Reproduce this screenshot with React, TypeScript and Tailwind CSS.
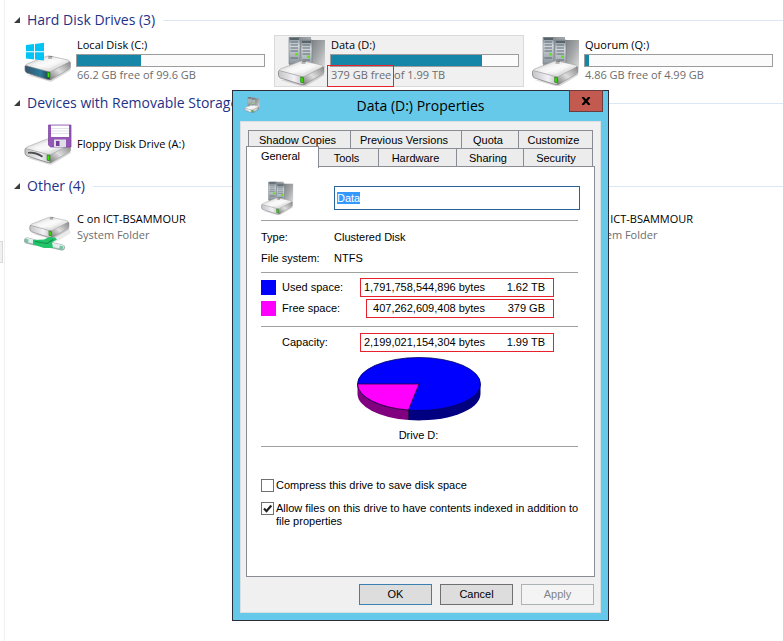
import { useEffect, useRef, useState } from "react";
import type { ReactNode } from "react";

type DriveKind = "system" | "cluster" | "floppy" | "network";

interface Drive {
  name: string;
  kind: DriveKind;
  detail?: string;
  used?: number;
  selected?: boolean;
  className?: string;
}

const hardDrives: Drive[] = [
  { name: "Local Disk (C:)", kind: "system", detail: "66.2 GB free of 99.6 GB", used: 34 },
  { name: "Data (D:)", kind: "cluster", detail: "379 GB free of 1.99 TB", used: 81, selected: true },
  { name: "Quorum (Q:)", kind: "cluster", detail: "4.86 GB free of 4.99 GB", used: 2 },
];

const removable: Drive[] = [{ name: "Floppy Disk Drive (A:)", kind: "floppy" }];

const others: Drive[] = [
  { name: "C on ICT-BSAMMOUR", kind: "network", detail: "System Folder" },
  { name: "E on ICT-BSAMMOUR", kind: "network", detail: "System Folder", className: "col-start-3" },
];

const topTabs = [
  { label: "Shadow Copies", width: "w-[103px]" },
  { label: "Previous Versions", width: "w-[112px]" },
  { label: "Quota", width: "w-[58px]" },
  { label: "Customize", width: "flex-1" },
];

const bottomTabs = [
  { label: "Tools", width: "w-[61px]" },
  { label: "Hardware", width: "w-[79px]" },
  { label: "Sharing", width: "w-[68px]" },
  { label: "Security", width: "flex-1" },
];

function IconDefs() {
  return (
    <svg className="absolute h-0 w-0" aria-hidden="true">
      <defs>
        <linearGradient id="lid" x1="0" y1="0" x2="1" y2="1">
          <stop offset="0" stopColor="#cfcfcf" />
          <stop offset="0.5" stopColor="#f8f8f8" />
          <stop offset="1" stopColor="#c2c2c2" />
        </linearGradient>
        <linearGradient id="side" x1="0" y1="1" x2="1" y2="0">
          <stop offset="0" stopColor="#7a7a7a" />
          <stop offset="0.45" stopColor="#dedede" />
          <stop offset="1" stopColor="#858585" />
        </linearGradient>
        <linearGradient id="steel" x1="0" y1="0" x2="1" y2="0">
          <stop offset="0" stopColor="#c4c4c8" />
          <stop offset="0.6" stopColor="#f2f2f6" />
          <stop offset="1" stopColor="#b9b9bd" />
        </linearGradient>
        <linearGradient id="ocean" x1="0" y1="0" x2="1" y2="0">
          <stop offset="0" stopColor="#37536b" />
          <stop offset="0.6" stopColor="#2c7d9c" />
          <stop offset="1" stopColor="#1f3442" />
        </linearGradient>
        <linearGradient id="tower" x1="0" y1="0" x2="1" y2="1">
          <stop offset="0" stopColor="#7b7f82" />
          <stop offset="0.5" stopColor="#a4a7a9" />
          <stop offset="1" stopColor="#dcdddd" />
        </linearGradient>
        <linearGradient id="rack" x1="0" y1="0" x2="0" y2="1">
          <stop offset="0" stopColor="#7d8a93" />
          <stop offset="0.3" stopColor="#d4dbe0" />
          <stop offset="1" stopColor="#8b959c" />
        </linearGradient>
      </defs>
    </svg>
  );
}

function DriveBody({ front }: { front: string }) {
  return (
    <g>
      <path d="M3 39 L27 46 L47 34 L46 31 L27 40Z" fill="#000" opacity="0.15" />
      <path d="M1 30.5 Q1 29 3 29.5 L26 35.5 L27 43.5 Q25 44 23 43.3 L3 37 Q1 36 1 34Z" fill={`url(#${front})`} stroke="#777" strokeWidth="0.7" />
      <path d="M26 35.5 L45 25.5 Q46.5 25.5 46.5 27 V31 Q46.5 32 45 33 L28 43 Q27 43.7 26 43.3Z" fill="url(#side)" stroke="#888" strokeWidth="0.5" />
      <path d="M2 29.5 Q1.5 28.8 3 28 L22 20.5 Q24 19.7 26 20 L44 24 Q46.5 25 44.5 26.2 L28 35 Q26 36 24 35.5Z" fill="url(#lid)" stroke="#a0a0a0" strokeWidth="0.6" />
      <path d="M8 28.5 L24 22.3 L38 25.5 L25 32.5Z" fill="#fff" opacity="0.4" />
      <path d="M24.5 20.6 h4 M24 22 h4" stroke="#6a6a6a" strokeWidth="0.8" />
      <path d="M23.2 36 L25.8 36.5 V41.8 L23.2 41.2Z" fill="#38e500" stroke="#126400" strokeWidth="0.6" />
    </g>
  );
}

function DriveIcon({ kind, className }: { kind: DriveKind; className: string }) {
  return (
    <svg viewBox="0 0 48 50" className={className} aria-hidden="true">
      {kind === "system" && (
        <>
          <DriveBody front="ocean" />
          <path d="M2 9 L10 8 V15.2 H2Z M11 7.9 L20 6.8 V15.2 H11Z M2 16.2 H10 V23.4 L2 22.4Z M11 16.2 H20 V24.6 L11 23.5Z" fill="#00c4f5" />
        </>
      )}
      {kind === "floppy" && (
        <>
          <DriveBody front="steel" />
          <path d="M4 33 Q12 32 19 37 L18 38.5 Q11 34 4 34.5Z" fill="#4d4d4d" />
          <path d="M24.5 6 H47 V28 H26.5 L24.5 26Z" fill="#9457b5" stroke="#7a3d9c" strokeWidth="0.7" />
          <path d="M27 6.5 H45 V18 H27Z" fill="#fff" />
          <path d="M27 9.5 H45 M27 12 H45 M27 14.5 H45" stroke="#d4d4df" strokeWidth="0.7" />
          <path d="M30 20.5 H42 V28 H30Z" fill="#dedee6" />
          <path d="M32 22 H35.5 V27 H32Z" fill="#783c9a" />
        </>
      )}
      {kind === "network" && (
        <>
          <path d="M22 38 L44 24 L47 31 L32 40Z" fill="#000" opacity="0.08" />
          <g transform="translate(5 -2) scale(0.86)">
            <DriveBody front="steel" />
          </g>
          <path d="M3 38.5 L11 40.5 M27 43 L38 45.5" stroke="#9fb0b2" strokeWidth="6" strokeLinecap="round" />
          <path d="M3 38 L11 40 M27 42.5 L38 45" stroke="#e4eeee" strokeWidth="4" strokeLinecap="round" />
          <path d="M1 36.5 L4.5 37.5 L4 41 L1 40Z M36 43.5 L39.5 44.5 L38 48 L35 47Z" fill="#73c5a0" />
          <path d="M9 38 L20 37.5 L25 35 L31 35.5 L33 37.5 L28 40.5 L29 46 L20 46 L9 42.5Z" fill="#22c46a" />
          <path d="M11 39.5 L23 41.5 L29 37.5" fill="none" stroke="#10904a" strokeWidth="1.1" />
        </>
      )}
      {kind === "cluster" && (
        <>
          <path d="M11 1.5 L14 1 H33 V30 H11Z" fill="url(#tower)" />
          <path d="M11 1.5 H22 V28 H11Z" fill="url(#rack)" stroke="#737d83" strokeWidth="0.6" />
          <path d="M12.5 6 H20 M12.5 9 H20 M12.5 12 H20 M12.5 15 H20 M12.5 22 H20" stroke="#5c6870" strokeWidth="1" />
          <path d="M12 3 H21" stroke="#4b555b" strokeWidth="1.6" />
          <path d="M33 4 H47 V32 H33Z" fill="url(#tower)" />
          <path d="M23 4 H34 V32 H23Z" fill="url(#rack)" stroke="#737d83" strokeWidth="0.6" />
          <path d="M24.5 9 H32 M24.5 12 H32 M24.5 15 H32 M24.5 18 H32 M24.5 24 H32" stroke="#5c6870" strokeWidth="1" />
          <path d="M24 6 H33" stroke="#4b555b" strokeWidth="1.6" />
          <path d="M17 17 h3 v2.5 h-3Z M29 19.5 h3 v2.5 h-3Z" fill="#5fe619" />
          <g transform="translate(-0.5 5)">
            <DriveBody front="steel" />
          </g>
        </>
      )}
    </svg>
  );
}

function DriveTile({ drive }: { drive: Drive }) {
  const frame = drive.selected ? "border-[#d9d9d9] bg-[#f0f0f0]" : "border-transparent";
  const hasMeter = drive.used !== undefined;
  return (
    <div className={`relative flex h-[52px] border pl-[3px] text-[11px] leading-4 ${frame} ${drive.className ?? ""}`}>
      <DriveIcon kind={drive.kind} className="h-[50px] w-12 shrink-0" />
      <div className={`flex min-w-0 flex-1 flex-col justify-center pr-1 pl-1 ${hasMeter ? "pb-[3px]" : ""}`}>
        <p className="pl-px whitespace-nowrap text-black">{drive.name}</p>
        {hasMeter && (
          <div
            role="meter"
            aria-label={drive.name}
            aria-valuenow={drive.used}
            className="mt-px h-[13px] border border-[#9c9c9c] bg-[#fbfbfb]"
          >
            <div className="h-full bg-[#1586a7]" style={{ width: `${drive.used}%` }} />
          </div>
        )}
        {drive.detail && <p className="pl-px whitespace-nowrap text-[#6d6d6d]">{drive.detail}</p>}
      </div>
      {drive.selected && <div className="absolute top-[29px] left-[52px] h-[22px] w-[67px] border border-[#e8222d]" />}
    </div>
  );
}

function DriveGroup({ title, drives }: { title: string; drives: Drive[] }) {
  return (
    <section className="pb-px">
      <button type="button" className="flex h-[30px] w-full items-center text-left">
        <svg viewBox="0 0 6 6" className="mr-[7px] ml-2 h-1.5 w-1.5 shrink-0" aria-hidden="true">
          <path d="M6 0 V6 H0Z" fill="#3c3c3c" />
        </svg>
        <span className="pb-0.5 text-[14px] whitespace-nowrap text-[#1e3287]">{title}</span>
        <span className="ml-2 h-px flex-1 bg-[#dce7f5]" />
      </button>
      <div className="grid grid-cols-[repeat(3,250px)] gap-1 pl-[14px]">
        {drives.map((drive) => (
          <DriveTile key={drive.name} drive={drive} />
        ))}
      </div>
    </section>
  );
}

function Tab({ label, width }: { label: string; width: string }) {
  return (
    <button
      type="button"
      role="tab"
      aria-selected={false}
      className={`-ml-px h-[19px] border border-[#898c95] bg-[#ececec] pr-1 leading-4 first:ml-0 ${width}`}
    >
      {label}
    </button>
  );
}

function SpaceRow({ swatch, label, bytes, size, box }: { swatch?: string; label: string; bytes: string; size: string; box: string }) {
  return (
    <div className="flex h-[21px] items-center">
      <span className={`mr-1.5 h-[15px] w-[15px] ${swatch ?? ""}`} />
      <span>{label}</span>
      <span className={`mr-6 ml-auto flex h-[19px] items-center justify-end border border-[#e8222d] pr-2 whitespace-nowrap ${box}`}>
        <span>{bytes}</span>
        <span className="w-[60px] text-right">{size}</span>
      </span>
    </div>
  );
}

function UsagePie() {
  return (
    <svg viewBox="0 0 124 64" className="h-16 w-[124px]" role="img" aria-label="Drive D:">
      <path d="M0.5 27 V37 A61.5 26.5 0 0 0 51.5 63 V53Z" fill="#800080" />
      <path d="M51.5 53 V63 A61.5 26.5 0 0 0 123.5 37 V27Z" fill="#000080" />
      <ellipse cx="62" cy="27" rx="61.5" ry="26.5" fill="#0000ff" stroke="#000060" strokeWidth="0.8" />
      <path d="M62 27 H0.5 A61.5 26.5 0 0 0 51.5 53Z" fill="#ff00ff" stroke="#300030" strokeWidth="0.8" />
      <path d="M51.5 53 V63" stroke="#200040" strokeWidth="0.8" />
    </svg>
  );
}

function CheckRow({ initial, children }: { initial: boolean; children: ReactNode }) {
  const [checked, setChecked] = useState(initial);
  return (
    <label className="-mr-3 flex items-start gap-0.5">
      <span className="relative h-[13px] w-[13px] shrink-0">
        <input
          type="checkbox"
          checked={checked}
          onChange={(e) => setChecked(e.target.checked)}
          className="block h-[13px] w-[13px] appearance-none border border-[#707070] bg-white"
        />
        {checked && (
          <svg viewBox="0 0 13 13" className="pointer-events-none absolute inset-0" aria-hidden="true">
            <path d="M3 6.5 L5.5 9.2 L10.3 3.5" fill="none" stroke="#212121" strokeWidth="2.2" />
          </svg>
        )}
      </span>
      <span>{children}</span>
    </label>
  );
}

function Rule() {
  return <hr className="border-t border-[#a0a0a0]" />;
}

function PropertiesDialog() {
  const nameRef = useRef<HTMLInputElement>(null);

  useEffect(() => {
    nameRef.current?.focus();
    nameRef.current?.select();
  }, []);

  return (
    <div
      role="dialog"
      aria-labelledby="dialog-title"
      className="absolute top-[90px] left-[232px] w-[377px] border border-[#2b2e38] bg-[#66c9ea] px-[7px] pb-[7px]"
    >
      <div className="relative flex h-[30px] items-center justify-center">
        <DriveIcon kind="cluster" className="absolute top-1.5 left-1 h-4 w-4" />
        <h1 id="dialog-title" className="pb-0.5 text-[14px] text-black">
          Data (D:) Properties
        </h1>
        <button
          type="button"
          aria-label="Close"
          className="absolute -top-px -right-0.5 flex h-[22px] w-[34px] items-center justify-center border border-[#6a3b3f] bg-[#c35a50]"
        >
          <svg viewBox="0 0 10 8" className="h-2 w-2.5" aria-hidden="true">
            <path d="M1.5 0 L8.5 8 M8.5 0 L1.5 8" stroke="#000" strokeWidth="2.2" />
          </svg>
        </button>
      </div>

      <div className="border border-[#d9dfe2] bg-[#f0f0f0] px-[5px] pt-2 pb-[7px] font-['Liberation_Sans',Arial,sans-serif] text-[11px] leading-[13px] text-black">
        {/* Tab strip */}
        <div role="tablist">
          <div className="flex pr-0.5 pl-0.5">
            {topTabs.map((tab) => (
              <Tab key={tab.label} {...tab} />
            ))}
          </div>
          <div className="-mt-px flex items-end pr-0.5">
            <button
              type="button"
              role="tab"
              aria-selected
              className="relative -mt-0.5 -mb-px h-[22px] w-[73px] border border-b-0 border-[#898c95] bg-white pr-1 pb-0.5"
            >
              General
            </button>
            {bottomTabs.map((tab) => (
              <Tab key={tab.label} {...tab} />
            ))}
          </div>
        </div>

        {/* General page */}
        <div role="tabpanel" className="-mt-px h-[411px] border border-[#898c95] bg-white pr-4 pl-[14px]">
          <div className="flex h-[53px] items-center pt-2">
            <DriveIcon kind="cluster" className="mr-10 h-[34px] w-[33px] shrink-0" />
            <input
              ref={nameRef}
              aria-label="Volume label"
              defaultValue="Data"
              className="-mr-0.5 h-6 min-w-0 flex-1 border border-[#2a6496] px-0.5 leading-[13px] outline-none selection:bg-[#3399ff] selection:text-white"
            />
          </div>
          <Rule />
          <div className="grid grid-cols-[73px_1fr] gap-y-2 pt-2.5 pb-[7px]">
            <span>Type:</span>
            <span>Clustered Disk</span>
            <span>File system:</span>
            <span>NTFS</span>
          </div>
          <Rule />
          <div className="pt-1 pb-[7px]">
            <SpaceRow swatch="bg-[#0000ff]" label="Used space:" bytes="1,791,758,544,896 bytes" size="1.62 TB" box="w-[194px]" />
            <SpaceRow swatch="bg-[#ff00ff]" label="Free space:" bytes="407,262,609,408 bytes" size="379 GB" box="w-[188px]" />
          </div>
          <Rule />
          <div className="pt-[5px]">
            <SpaceRow label="Capacity:" bytes="2,199,021,154,304 bytes" size="1.99 TB" box="w-[194px]" />
          </div>
          <div className="flex flex-col items-center pt-1 pr-0.5">
            <UsagePie />
            <p className="mt-2 mb-1">Drive D:</p>
          </div>
          <Rule />
          <div className="space-y-2.5 pt-8">
            <CheckRow initial={false}>Compress this drive to save disk space</CheckRow>
            <CheckRow initial={true}>Allow files on this drive to have contents indexed in addition to file properties</CheckRow>
          </div>
        </div>

        {/* Footer */}
        <div className="mt-[7px] flex justify-end gap-2 pr-px">
          <button type="button" className="h-[21px] w-[73px] border border-[#3c7fb1] bg-[#dddddd]">
            OK
          </button>
          <button type="button" className="h-[21px] w-[73px] border border-[#707070] bg-[#dddddd]">
            Cancel
          </button>
          <button type="button" disabled className="h-[21px] w-[73px] border border-[#adb2b5] bg-[#f4f4f4] text-[#838383]">
            Apply
          </button>
        </div>
      </div>
    </div>
  );
}

export default function App() {
  return (
    <div className="relative flex min-h-screen overflow-hidden bg-white font-['Open_Sans','Noto_Sans',sans-serif]">
      <IconDefs />
      <aside className="w-[5px] shrink-0 border-r border-[#f0f0f0] pt-[241px]">
        <div className="h-[22px] w-[3px] border border-l-0 border-[#d9d9d9] bg-[#f0f0f0]" />
      </aside>
      <main className="min-w-0 flex-1 pt-[5px] pl-px">
        <DriveGroup title="Hard Disk Drives (3)" drives={hardDrives} />
        <DriveGroup title="Devices with Removable Storage (1)" drives={removable} />
        <DriveGroup title="Other (4)" drives={others} />
      </main>
      <PropertiesDialog />
    </div>
  );
}
